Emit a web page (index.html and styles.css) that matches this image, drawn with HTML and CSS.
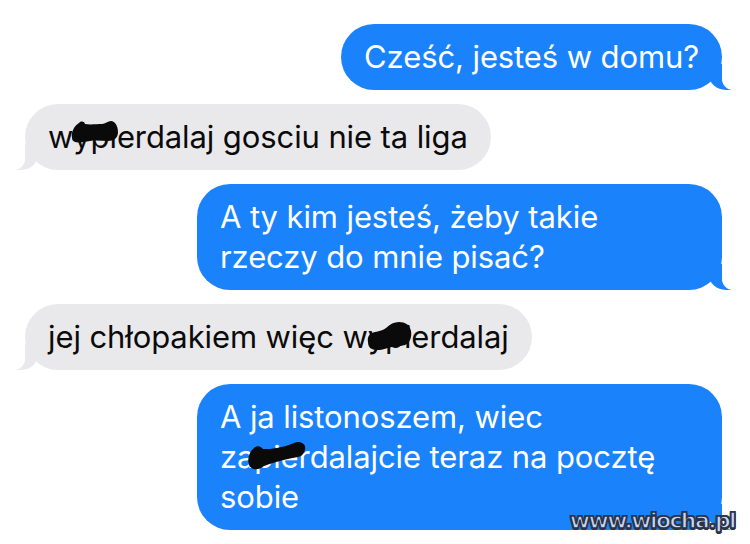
FILE: index.html
```html
<!DOCTYPE html>
<html lang="pl">
<head>
<meta charset="utf-8">
<title>Wiadomości</title>
<link rel="stylesheet" href="styles.css">
</head>
<body>
<main class="chat">
  <div class="row row-out">
    <div class="bubble out">Cześć, jesteś w domu?</div>
  </div>

  <div class="row row-in">
    <div class="bubble in"><span class="censor">wypierdalaj<svg class="blot blot-1" viewBox="0 0 50 26" aria-hidden="true"><path d="M2 18 C1 12 4 6 9 3 C11 1 14 1 15 4 C20 5 27 4 32 4 C35 4 38 1 41 1 C45 1 48 6 48 12 C48 18 44 21 38 21 C32 21 26 20 20 21 C14 22 8 23 5 22 C3 21 2 20 2 18 Z"/></svg></span> gosciu nie ta liga</div>
  </div>

  <div class="row row-out">
    <div class="bubble out">A ty kim jesteś, żeby takie rzeczy do mnie pisać?</div>
  </div>

  <div class="row row-in">
    <div class="bubble in">jej chłopakiem więc <span class="censor">wypierdalaj<svg class="blot blot-2" viewBox="0 0 46 30" aria-hidden="true"><path d="M2 20 C1 14 4 11 9 10 C13 9 16 9 20 6 C24 2 28 0 33 0 C39 0 44 3 45 9 C46 15 44 21 39 23 C33 25 27 24 22 26 C16 28 10 29 6 27 C3 26 2 23 2 20 Z"/></svg></span></div>
  </div>

  <div class="row row-out">
    <div class="bubble out">A ja listonoszem, wiec <span class="censor">zapierdalajcie<svg class="blot blot-3" viewBox="0 0 60 30" aria-hidden="true"><path d="M3 24 C1 18 3 11 8 7 C11 4 15 5 17 8 C21 8 26 8 31 7 C37 6 43 4 48 2 C52 0 57 1 59 5 C60 10 57 15 52 16 C46 17 40 18 34 20 C28 22 22 23 18 25 C13 29 6 30 3 24 Z"/></svg></span> teraz na pocztę sobie</div>
  </div>

  <div class="watermark">www.wiocha.pl</div>
</main>
</body>
</html>
```

FILE: styles.css
```css
* {
  box-sizing: border-box;
}

html, body {
  margin: 0;
  padding: 0;
  background: #ffffff;
}

body {
  width: 750px;
  height: 544px;
  overflow: hidden;
  font-family: "Inter", "Roboto", "Liberation Sans", sans-serif;
}

.chat {
  position: relative;
  height: 544px;
  padding-top: 24px;
  display: flex;
  flex-direction: column;
  gap: 14px;
}

.row {
  display: flex;
}

.row-out {
  justify-content: flex-end;
  padding-right: 28px;
}

.row-in {
  justify-content: flex-start;
  padding-left: 25px;
}

.bubble {
  position: relative;
  max-width: 525px;
  padding: 13px 23px;
  border-radius: 33px;
  font-size: 31px;
  line-height: 40px;
  letter-spacing: -0.1px;
}

.out {
  background: #1a82fb;
  color: #ffffff;
}

.in {
  background: #e9e9eb;
  color: #0b0b0b;
}

/* tails */
.bubble::before,
.bubble::after {
  content: "";
  position: absolute;
  bottom: 0;
  height: 26px;
}

.out::before {
  right: -9px;
  width: 22px;
  background: #1a82fb;
  border-bottom-left-radius: 17px 15px;
}

.out::after {
  right: -28px;
  width: 28px;
  background: #ffffff;
  border-bottom-left-radius: 11px;
}

.in::before {
  left: -9px;
  width: 22px;
  background: #e9e9eb;
  border-bottom-right-radius: 17px 15px;
}

.in::after {
  left: -28px;
  width: 28px;
  background: #ffffff;
  border-bottom-right-radius: 11px;
}

.censor {
  position: relative;
}

.blot {
  position: absolute;
  fill: #0a0a0a;
  z-index: 2;
}

.blot-1 {
  left: 22px;
  top: 2px;
  width: 50px;
  height: 26px;
}

.blot-2 {
  left: 24px;
  top: 4px;
  width: 46px;
  height: 30px;
}

.blot-3 {
  left: 26px;
  top: 3px;
  width: 60px;
  height: 30px;
}

.watermark {
  position: absolute;
  right: 15px;
  bottom: 12px;
  font-family: "DejaVu Sans", sans-serif;
  font-weight: bold;
  font-size: 22px;
  letter-spacing: -1.6px;
  line-height: 1;
  color: #c3d5fa;
  -webkit-text-stroke: 1.4px #2c3344;
  text-shadow: 1px 1px 0 #2c3344, -1px -1px 0 #2c3344, 1px -1px 0 #2c3344, -1px 1px 0 #2c3344, 0 1.5px 0 #2c3344;
  z-index: 3;
}
```
